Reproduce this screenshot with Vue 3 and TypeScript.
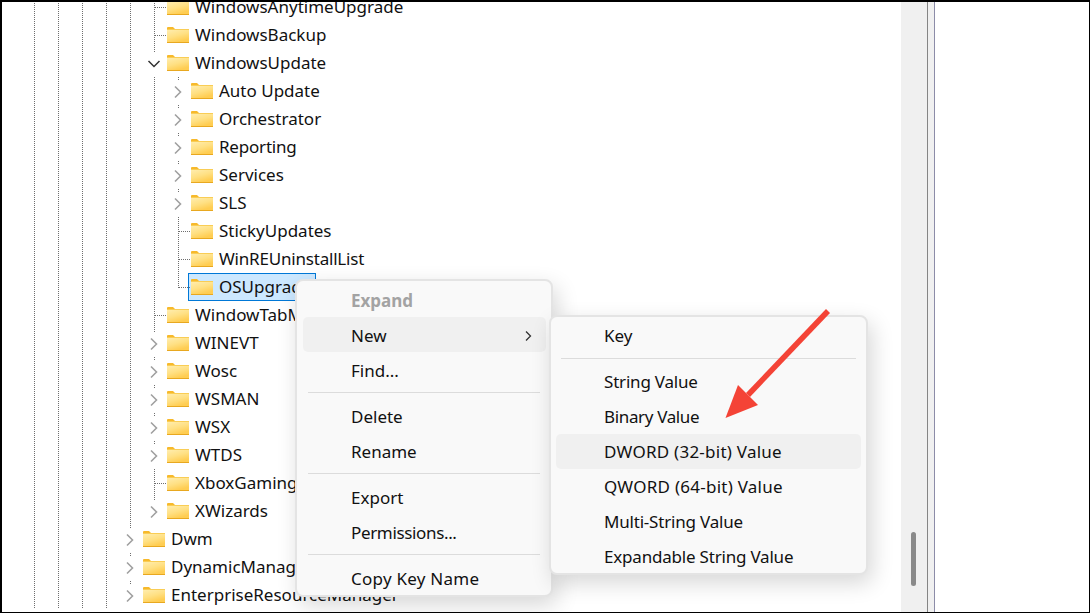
<script setup lang="ts">
type Row = { name: string; level: number; mark: 'right' | 'down' | 'stub' | 'last'; selected?: boolean; fit?: string }

const rows: Row[] = [
  { name: 'WindowsAnytimeUpgrade', level: 2, mark: 'stub' },
  { name: 'WindowsBackup', level: 2, mark: 'stub' },
  { name: 'WindowsUpdate', level: 2, mark: 'down' },
  { name: 'Auto Update', level: 3, mark: 'right' },
  { name: 'Orchestrator', level: 3, mark: 'right' },
  { name: 'Reporting', level: 3, mark: 'right', fit: 'tight' },
  { name: 'Services', level: 3, mark: 'right' },
  { name: 'SLS', level: 3, mark: 'right' },
  { name: 'StickyUpdates', level: 3, mark: 'stub' },
  { name: 'WinREUninstallList', level: 3, mark: 'stub', fit: 'tight' },
  { name: 'OSUpgrade', level: 3, mark: 'last', selected: true },
  { name: 'WindowTabManager', level: 2, mark: 'stub' },
  { name: 'WINEVT', level: 2, mark: 'right' },
  { name: 'Wosc', level: 2, mark: 'right' },
  { name: 'WSMAN', level: 2, mark: 'right' },
  { name: 'WSX', level: 2, mark: 'right' },
  { name: 'WTDS', level: 2, mark: 'right' },
  { name: 'XboxGamingOverlay', level: 2, mark: 'stub' },
  { name: 'XWizards', level: 2, mark: 'right' },
  { name: 'Dwm', level: 1, mark: 'right' },
  { name: 'DynamicManagement', level: 1, mark: 'right' },
  { name: 'EnterpriseResourceManager', level: 1, mark: 'right' },
]

// Number of full-height guide lines drawn before the row's own marker cell.
const guides = (r: Row) => r.level + 3

type Entry = { label?: string; kind: 'item' | 'sep'; disabled?: boolean; hot?: boolean; more?: boolean; fit?: string }

const mainMenu: Entry[] = [
  { label: 'Expand', kind: 'item', disabled: true },
  { label: 'New', kind: 'item', hot: true, more: true },
  { label: 'Find...', kind: 'item' },
  { kind: 'sep' },
  { label: 'Delete', kind: 'item' },
  { label: 'Rename', kind: 'item' },
  { kind: 'sep' },
  { label: 'Export', kind: 'item' },
  { label: 'Permissions...', kind: 'item', fit: 'tighter' },
  { kind: 'sep' },
  { label: 'Copy Key Name', kind: 'item', fit: 'wide' },
]

const subMenu: Entry[] = [
  { label: 'Key', kind: 'item' },
  { kind: 'sep' },
  { label: 'String Value', kind: 'item', fit: 'tight' },
  { label: 'Binary Value', kind: 'item', fit: 'tighter' },
  { label: 'DWORD (32-bit) Value', kind: 'item', hot: true, fit: 'wide' },
  { label: 'QWORD (64-bit) Value', kind: 'item', fit: 'wide' },
  { label: 'Multi-String Value', kind: 'item', fit: 'tight' },
  { label: 'Expandable String Value', kind: 'item', fit: 'tight' },
]
</script>

<template>
  <div class="frame">
    <div class="tree">
      <div v-for="(r, idx) in rows" :key="r.name" class="row">
        <span v-for="n in guides(r)" :key="n" class="cell guide"></span>
        <span class="cell" :class="r.mark">
          <svg v-if="r.mark === 'right'" class="chev" width="10" height="14" viewBox="0 0 10 14">
            <path d="M2 1.5 L7.5 7 L2 12.5" fill="none" stroke="#a0a0a0" stroke-width="1.6" />
          </svg>
          <svg v-if="r.mark === 'down'" class="chev" width="14" height="10" viewBox="0 0 14 10">
            <path d="M1.5 2 L7 7.5 L12.5 2" fill="none" stroke="#333" stroke-width="1.5" />
          </svg>
        </span>
        <span class="node" :class="{ selected: r.selected }">
          <svg class="folder" width="22" height="16" viewBox="0 0 22 16">
            <defs>
              <linearGradient :id="'folder' + idx" x1="0" y1="0" x2="0.5" y2="1">
                <stop offset="0" stop-color="#ffedae" />
                <stop offset="0.55" stop-color="#ffe083" />
                <stop offset="1" stop-color="#ffcd52" />
              </linearGradient>
            </defs>
            <path d="M0 1 Q0 0 1 0 H6 L8 2 H0 Z" fill="#f7b92b" />
            <rect x="0" y="2" width="22" height="1" fill="#f9cd55" />
            <rect x="0" y="3" width="22" height="12" :fill="'url(#folder' + idx + ')'" />
            <rect x="0" y="15" width="22" height="1" fill="#e8a820" />
          </svg>
          <span class="name" :class="r.fit">{{ r.name }}</span>
        </span>
      </div>
    </div>
    <div class="scrollbar"><div class="thumb"></div></div>
    <div class="splitter"></div>
    <div class="values"></div>

    <div class="menu main">
      <template v-for="(e, i) in mainMenu" :key="i">
        <div v-if="e.kind === 'sep'" class="sep"></div>
        <div v-else class="item" :class="{ hot: e.hot, disabled: e.disabled }">
          <span :class="e.fit">{{ e.label }}</span>
          <svg v-if="e.more" class="more" width="8" height="12" viewBox="0 0 8 12">
            <path d="M2 1.5 L6.5 6 L2 10.5" fill="none" stroke="#333" stroke-width="1.3" />
          </svg>
        </div>
      </template>
    </div>

    <div class="menu sub">
      <template v-for="(e, i) in subMenu" :key="i">
        <div v-if="e.kind === 'sep'" class="sep"></div>
        <div v-else class="item" :class="{ hot: e.hot }">
          <span :class="e.fit">{{ e.label }}</span>
        </div>
      </template>
    </div>

    <svg class="arrow" width="130" height="130" viewBox="0 0 130 130">
      <path d="M108 3 L28 87" stroke="#f44336" stroke-width="5.5" stroke-linecap="butt" fill="none" />
      <path d="M5.5 110 L18 77 L38 97 Z" fill="#f44336" />
    </svg>
  </div>
</template>

<style>
html, body { margin: 0; background: #fff; }
</style>

<style scoped>
.frame {
  position: relative;
  box-sizing: border-box;
  width: 1090px;
  height: 613px;
  display: flex;
  overflow: hidden;
  background: #fff;
  border-style: solid;
  border-color: #000;
  border-width: 2px 1px 1px 2px;
  font-family: "Noto Sans", "Open Sans", sans-serif;
  font-size: 17px;
  color: #111;
}
.tree {
  width: 899px;
  height: 610px;
  overflow: hidden;
  padding-left: 20px;
  box-sizing: border-box;
}
.row {
  display: flex;
  align-items: center;
  height: 28px;
  white-space: nowrap;
}
.row:first-child { margin-top: -9px; }
.cell {
  position: relative;
  flex: none;
  width: 24px;
  height: 28px;
  background-repeat: no-repeat;
}
.guide, .stub, .last, .right, .down {
  background-image: repeating-linear-gradient(to bottom, #6e6e6e 0 1px, transparent 1px 2px);
  background-size: 1px 100%;
  background-position: 12px 0;
}
.last { background-size: 1px 15px; }
.right, .down { background-size: 1px 3px; }
.stub::after, .last::after {
  content: "";
  position: absolute;
  left: 13px;
  top: 14px;
  width: 11px;
  height: 1px;
  background: repeating-linear-gradient(to right, #6e6e6e 0 1px, transparent 1px 2px);
}
.chev { position: absolute; }
.right .chev { left: 7px; top: 8px; }
.down .chev { left: 5px; top: 10px; }
.node {
  display: flex;
  align-items: center;
  box-sizing: border-box;
  height: 28px;
  margin-left: -2px;
  padding: 0 4px 0 2px;
  border: 1px solid transparent;
  gap: 6px;
}
.node.selected {
  background: #cce8ff;
  border-color: #0078d7;
}
.folder { flex: none; }
.name { line-height: 26px; }
.tight { letter-spacing: -0.2px; }
.tighter { letter-spacing: -0.35px; }
.wide { letter-spacing: 0.25px; }
.scrollbar {
  position: relative;
  width: 26px;
  height: 610px;
  background: #f0f0f0;
  border-right: 1px solid #858585;
  flex: none;
}
.thumb {
  position: absolute;
  left: 10px;
  top: 530px;
  width: 5px;
  height: 54px;
  border-radius: 3px;
  background: #8a8a8a;
}
.splitter {
  width: 6px;
  flex: none;
  background: #f0f0f0;
  border-right: 1px solid #8c8ca8;
}
.values { flex: 1; background: #fff; }
.menu {
  position: absolute;
  box-sizing: border-box;
  background: #f9f9f9;
  border: 2px solid #e4e4e4;
  border-radius: 8px;
  box-shadow: 4px 8px 22px rgba(0, 0, 0, 0.16);
}
.menu.main { left: 293px; top: 277px; width: 258px; height: 318px; padding: 1px 5px 1px 6px; }
.menu.sub { left: 547px; top: 313px; width: 319px; height: 260px; padding: 1px 5px; }
.item {
  display: flex;
  align-items: center;
  justify-content: space-between;
  box-sizing: border-box;
  height: 35px;
  padding: 0 14px 0 48px;
  border-radius: 5px;
  white-space: nowrap;
}
.main .item { padding-top: 2px; }
.hot { background: #f0f0f0; }
.disabled { color: #a3a3a3; font-weight: 700; }
.sep {
  height: 1px;
  margin: 5px 6px 5px 5px;
  background: #dcdcdc;
}
.sub .sep { margin: 5px; }
.arrow {
  position: absolute;
  left: 718px;
  top: 306px;
}
</style>
